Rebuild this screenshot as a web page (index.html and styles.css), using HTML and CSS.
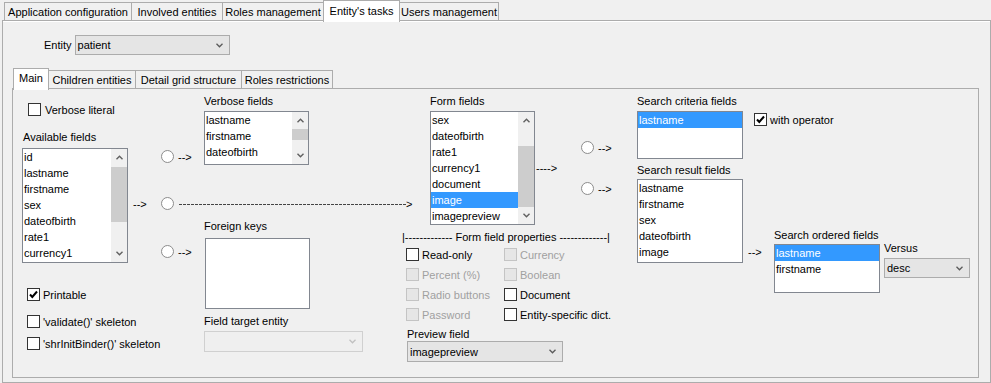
FILE: index.html
```html
<!DOCTYPE html>
<html lang="en">
<head>
    <meta charset="UTF-8">
    <title>Entity's tasks</title>
    <link rel="stylesheet" href="styles.css">
</head>
<body>
    <div class="tabs">
        <div class="tab w-app">Application configuration</div>
        <div class="tab w-inv">Involved entities</div>
        <div class="tab w-roles">Roles management</div>
        <div class="tab active w-tasks">Entity's tasks</div>
        <div class="tab w-users">Users management</div>
    </div>

    <div class="panel">
        <div class="entity-row">
            <span>Entity</span>
            <div class="combo c-entity">
                <span>patient</span>
                <svg class="chev" width="7" height="5" viewBox="0 0 7 5"><polyline points="0.5,0.8 3.5,3.8 6.5,0.8"/></svg>
            </div>
        </div>

        <div class="subtabs">
            <div class="subtab active w-main">Main</div>
            <div class="subtab w-children">Children entities</div>
            <div class="subtab w-detail">Detail grid structure</div>
            <div class="subtab w-rr">Roles restrictions</div>
        </div>

        <div class="subpanel">
            <!-- available fields -->
            <div class="col col-avail">
                <div class="chk-row r-verbose"><span class="box"></span><span>Verbose literal</span></div>
                <div class="lbl l-avail-lbl">Available fields</div>
                <div class="list l-avail">
                    <div class="list-items">
                        <div class="item">id</div>
                        <div class="item">lastname</div>
                        <div class="item">firstname</div>
                        <div class="item">sex</div>
                        <div class="item">dateofbirth</div>
                        <div class="item">rate1</div>
                        <div class="item">currency1</div>
                    </div>
                    <div class="sb">
                        <div class="sb-btn"><svg width="7" height="5" viewBox="0 0 7 5"><polyline points="0.5,4.2 3.5,1.2 6.5,4.2"/></svg></div>
                        <div class="sb-track"><div class="thumb t-avail"></div></div>
                        <div class="sb-btn"><svg width="7" height="5" viewBox="0 0 7 5"><polyline points="0.5,0.8 3.5,3.8 6.5,0.8"/></svg></div>
                    </div>
                </div>
                <div class="chk-row r-printable"><span class="box checked"><svg width="11" height="11" viewBox="0 0 11 11"><polyline points="2,5.5 4.3,8 9,2.5"/></svg></span><span>Printable</span></div>
                <div class="chk-row r-validate"><span class="box"></span><span>'validate()' skeleton</span></div>
                <div class="chk-row r-binder"><span class="box"></span><span>'shrInitBinder()' skeleton</span></div>
            </div>

            <!-- first arrows -->
            <div class="col col-arrows">
                <div class="radio-row r-radio1"><span class="radio"></span><span>--&gt;</span></div>
                <div class="radio-row r-radio2">
                    <span class="arrow-txt">--&gt;</span>
                    <span class="radio"></span>
                    <span class="dash-line"></span><span class="dash-head">&gt;</span>
                </div>
                <div class="radio-row r-radio3"><span class="radio"></span><span>--&gt;</span></div>
            </div>

            <!-- verbose / foreign keys -->
            <div class="col col-mid">
                <div class="lbl m-top5">Verbose fields</div>
                <div class="list l-verbose">
                    <div class="list-items">
                        <div class="item">lastname</div>
                        <div class="item">firstname</div>
                        <div class="item">dateofbirth</div>
                        <div class="item">currency1</div>
                    </div>
                    <div class="sb">
                        <div class="sb-btn"><svg width="7" height="5" viewBox="0 0 7 5"><polyline points="0.5,4.2 3.5,1.2 6.5,4.2"/></svg></div>
                        <div class="sb-track"><div class="thumb t-verbose"></div></div>
                        <div class="sb-btn"><svg width="7" height="5" viewBox="0 0 7 5"><polyline points="0.5,0.8 3.5,3.8 6.5,0.8"/></svg></div>
                    </div>
                </div>
                <div class="lbl l-fk-lbl">Foreign keys</div>
                <div class="list l-fk"></div>
                <div class="lbl l-target-lbl">Field target entity</div>
                <div class="combo disabled c-target">
                    <span></span>
                    <svg class="chev" width="7" height="5" viewBox="0 0 7 5"><polyline points="0.5,0.8 3.5,3.8 6.5,0.8"/></svg>
                </div>
            </div>

            <!-- form fields -->
            <div class="col col-form">
                <div class="form-top">
                    <div class="form-block">
                        <div class="lbl m-top5">Form fields</div>
                        <div class="list l-form">
                            <div class="list-items">
                                <div class="item">sex</div>
                                <div class="item">dateofbirth</div>
                                <div class="item">rate1</div>
                                <div class="item">currency1</div>
                                <div class="item">document</div>
                                <div class="item sel">image</div>
                                <div class="item">imagepreview</div>
                            </div>
                            <div class="sb">
                                <div class="sb-btn"><svg width="7" height="5" viewBox="0 0 7 5"><polyline points="0.5,4.2 3.5,1.2 6.5,4.2"/></svg></div>
                                <div class="sb-track"><div class="thumb t-form"></div></div>
                                <div class="sb-btn"><svg width="7" height="5" viewBox="0 0 7 5"><polyline points="0.5,0.8 3.5,3.8 6.5,0.8"/></svg></div>
                            </div>
                        </div>
                    </div>
                    <div class="form-arrows">
                        <div class="radio-row fa-1"><span class="radio"></span><span>--&gt;</span></div>
                        <div class="fa-mid">----&gt;</div>
                        <div class="radio-row fa-2"><span class="radio"></span><span>--&gt;</span></div>
                    </div>
                </div>

                <div class="props-head">|------------- Form field properties -------------|</div>
                <div class="props">
                    <div class="chk-row"><span class="box"></span><span>Read-only</span></div>
                    <div class="chk-row off"><span class="box"></span><span>Currency</span></div>
                    <div class="chk-row off"><span class="box"></span><span>Percent (%)</span></div>
                    <div class="chk-row off"><span class="box"></span><span>Boolean</span></div>
                    <div class="chk-row off"><span class="box"></span><span>Radio buttons</span></div>
                    <div class="chk-row"><span class="box"></span><span>Document</span></div>
                    <div class="chk-row off"><span class="box"></span><span>Password</span></div>
                    <div class="chk-row"><span class="box"></span><span>Entity-specific dict.</span></div>
                </div>
                <div class="lbl l-preview-lbl">Preview field</div>
                <div class="combo c-preview">
                    <span>imagepreview</span>
                    <svg class="chev" width="7" height="5" viewBox="0 0 7 5"><polyline points="0.5,0.8 3.5,3.8 6.5,0.8"/></svg>
                </div>
            </div>

            <!-- search -->
            <div class="col col-search">
                <div class="search-top">
                    <div>
                        <div class="lbl m-top5">Search criteria fields</div>
                        <div class="list l-crit">
                            <div class="list-items">
                                <div class="item sel">lastname</div>
                            </div>
                        </div>
                    </div>
                    <div class="chk-row r-operator"><span class="box checked"><svg width="11" height="11" viewBox="0 0 11 11"><polyline points="2,5.5 4.3,8 9,2.5"/></svg></span><span>with operator</span></div>
                </div>
                <div class="search-bottom">
                    <div>
                        <div class="lbl">Search result fields</div>
                        <div class="list l-result">
                            <div class="list-items">
                                <div class="item">lastname</div>
                                <div class="item">firstname</div>
                                <div class="item">sex</div>
                                <div class="item">dateofbirth</div>
                                <div class="item">image</div>
                            </div>
                        </div>
                    </div>
                    <div class="lbl order-arrow">--&gt;</div>
                    <div class="order-block">
                        <div class="lbl">Search ordered fields</div>
                        <div class="list l-order">
                            <div class="list-items">
                                <div class="item sel">lastname</div>
                                <div class="item">firstname</div>
                            </div>
                        </div>
                    </div>
                    <div class="versus-block">
                        <div class="lbl">Versus</div>
                        <div class="combo c-versus">
                            <span>desc</span>
                            <svg class="chev" width="7" height="5" viewBox="0 0 7 5"><polyline points="0.5,0.8 3.5,3.8 6.5,0.8"/></svg>
                        </div>
                    </div>
                </div>
            </div>
        </div>
    </div>
</body>
</html>
```

FILE: styles.css
```css
* {
    box-sizing: border-box;
}

body {
    margin: 0;
    width: 991px;
    height: 383px;
    overflow: hidden;
    background-color: #f0f0f0;
    font-family: "Liberation Sans", Arial, sans-serif;
    font-size: 11px;
    color: #000;
}

/* top tabs */
.tabs {
    display: flex;
    align-items: flex-end;
    height: 21px;
    margin-bottom: -1px;
    padding-left: 4px;
    position: relative;
    z-index: 1;
}

.tab {
    height: 18px;
    margin-bottom: 1px;
    margin-left: -1px;
    padding-top: 1px;
    border: 1px solid #acacac;
    border-bottom: none;
    background-color: #f0f0f0;
    display: flex;
    align-items: center;
    justify-content: center;
    white-space: nowrap;
}

.tab:first-child {
    margin-left: 0;
}

.tab.active {
    height: 22px;
    margin-bottom: -1px;
    padding-top: 0;
    padding-bottom: 2px;
    background-color: #fff;
}

.w-app { width: 128px; }
.w-inv { width: 92px; }
.w-roles { width: 102px; }
.w-tasks { width: 77px; }
.w-users { width: 100px; }

.panel {
    margin-left: 2px;
    width: 989px;
    height: 363px;
    border: 1px solid #acacac;
    box-shadow: inset 0 1px 0 #fff;
}

.entity-row {
    display: flex;
    align-items: center;
    gap: 3px;
    margin-top: 14px;
    padding-left: 41px;
}

/* combo boxes */
.combo {
    display: flex;
    align-items: center;
    justify-content: space-between;
    padding: 0 6px 0 2px;
    border: 1px solid #acacac;
    background-color: #e5e5e5;
    white-space: nowrap;
}

.combo .chev polyline {
    fill: none;
    stroke: #5a5a5a;
    stroke-width: 1.3;
}

.combo.disabled {
    border-color: #d0d0d0;
    background-color: #efefef;
}

.combo.disabled .chev polyline {
    stroke: #c0c0c0;
}

.c-entity { width: 155px; height: 20px; }
.c-target { width: 159px; height: 21px; margin-top: 3px; }
.c-preview { width: 156px; height: 21px; margin-left: 7px; }
.c-versus { width: 86px; height: 20px; margin-top: 3px; }

/* inner tabs */
.subtabs {
    display: flex;
    align-items: flex-end;
    height: 21px;
    margin-top: 13px;
    margin-bottom: -1px;
    padding-left: 10px;
    position: relative;
    z-index: 1;
}

.subtab {
    height: 18px;
    margin-bottom: 1px;
    margin-left: -1px;
    border: 1px solid #acacac;
    border-bottom: none;
    background-color: #f0f0f0;
    display: flex;
    align-items: center;
    justify-content: center;
    white-space: nowrap;
}

.subtab:first-child {
    margin-left: 0;
}

.subtab.active {
    height: 22px;
    margin-bottom: -1px;
    padding-bottom: 4px;
    background-color: #fff;
}

.w-main { width: 36px; }
.w-children { width: 88px; }
.w-detail { width: 107px; }
.w-rr { width: 92px; }

.subpanel {
    margin-left: 9px;
    width: 967px;
    height: 290px;
    border: 1px solid #acacac;
    display: flex;
    align-items: flex-start;
}

.col {
    display: flex;
    flex-direction: column;
    align-items: flex-start;
}

.lbl {
    height: 14px;
    line-height: 14px;
    white-space: nowrap;
}

.m-top5 {
    margin-top: 5px;
}

/* lists */
.list {
    display: flex;
    border: 1px solid #828790;
    background-color: #fff;
    overflow: hidden;
    margin-top: 3px;
}

.list-items {
    flex: 1;
    overflow: hidden;
}

.item {
    height: 16px;
    line-height: 16px;
    padding-left: 1px;
    white-space: nowrap;
}

.item.sel {
    background-color: #3399ff;
    color: #fff;
}

.sb {
    width: 16px;
    display: flex;
    flex-direction: column;
    background-color: #f0f0f0;
}

.sb-btn {
    height: 17px;
    display: flex;
    align-items: center;
    justify-content: center;
}

.sb-btn polyline {
    fill: none;
    stroke: #606060;
    stroke-width: 1.4;
}

.sb-track {
    flex: 1;
}

.thumb {
    background-color: #cdcdcd;
}

.t-avail { margin-top: 1px; height: 55px; }
.t-verbose { margin-top: 0; height: 11px; }
.t-form { margin-top: 17px; height: 61px; }

.l-avail { width: 106px; height: 115px; margin-top: 4px; }
.l-verbose { width: 105px; height: 54px; }
.l-fk { width: 105px; height: 71px; margin-top: 5px; margin-left: 1px; }
.l-form { width: 105px; height: 114px; }
.l-crit { width: 106px; height: 48px; }
.l-result { width: 106px; height: 84px; margin-top: 2px; }
.l-order { width: 106px; height: 49px; margin-top: 2px; }

/* checkboxes and radios */
.chk-row {
    display: flex;
    align-items: center;
    gap: 3px;
    height: 13px;
    white-space: nowrap;
}

.box {
    width: 13px;
    height: 13px;
    border: 1px solid #333;
    background-color: #fff;
    display: flex;
    align-items: center;
    justify-content: center;
}

.box polyline {
    fill: none;
    stroke: #000;
    stroke-width: 2;
}

.chk-row.off {
    color: #a0a0a0;
}

.chk-row.off .box {
    border-color: #c4c4c4;
    background-color: #e6e6e6;
}

.radio-row {
    display: flex;
    align-items: center;
    gap: 4px;
    height: 13px;
    white-space: nowrap;
}

.radio {
    width: 13px;
    height: 13px;
    border: 1px solid #8c8c8c;
    border-radius: 50%;
    background-color: #fff;
}

/* column: available fields */
.col-avail {
    width: 106px;
    margin-left: 9px;
}

.r-verbose { margin-top: 14px; margin-left: 6px; gap: 4px; }
.l-avail-lbl { margin-top: 14px; margin-left: 1px; }
.r-printable { margin-top: 25px; margin-left: 5px; }
.r-validate { margin-top: 14px; margin-left: 5px; }
.r-binder { margin-top: 9px; margin-left: 5px; }

/* column: arrows */
.col-arrows {
    width: 76px;
}

.r-radio1 { margin-top: 61px; padding-left: 33px; }
.r-radio2 { margin-top: 34px; padding-left: 5px; gap: 0; }
.r-radio3 { margin-top: 35px; padding-left: 33px; }

.arrow-txt {
    width: 28px;
}

.dash-line {
    width: 228px;
    height: 1px;
    margin-left: 5px;
    margin-top: 1px;
    background: repeating-linear-gradient(90deg, #444 0 3px, transparent 3px 4px);
}

.dash-head {
    margin-left: -1px;
}

/* column: verbose / foreign keys */
.col-mid {
    width: 159px;
}

.l-fk-lbl { margin-top: 54px; }
.l-target-lbl { margin-top: 5px; }

/* column: form fields */
.col-form {
    width: 237px;
    margin-left: 37px;
}

.form-top {
    display: flex;
    align-items: flex-start;
}

.form-block {
    margin-left: 30px;
}

.form-arrows {
    display: flex;
    flex-direction: column;
    align-items: flex-start;
}

.fa-1 { margin-top: 52px; margin-left: 46px; }
.fa-mid { margin-top: 7px; margin-left: 1px; height: 14px; line-height: 14px; }
.fa-2 { margin-top: 7px; margin-left: 46px; }

.props-head {
    margin-top: 5px;
    margin-left: 2px;
    height: 14px;
    line-height: 14px;
    white-space: nowrap;
}

.props {
    display: grid;
    grid-template-columns: 98px auto;
    row-gap: 7px;
    margin-top: 4px;
    margin-left: 6px;
}

.l-preview-lbl { margin-top: 6px; margin-left: 7px; }

/* column: search */
.col-search {
    flex: 1;
}

.search-top {
    display: flex;
    align-items: flex-start;
}

.r-operator { margin-top: 24px; margin-left: 11px; }

.search-bottom {
    display: flex;
    align-items: flex-start;
    margin-top: 4px;
}

.order-arrow {
    width: 26px;
    margin-top: 82px;
    margin-left: 5px;
}

.order-block {
    margin-top: 65px;
}

.versus-block {
    margin-top: 78px;
    margin-left: 4px;
}
```
